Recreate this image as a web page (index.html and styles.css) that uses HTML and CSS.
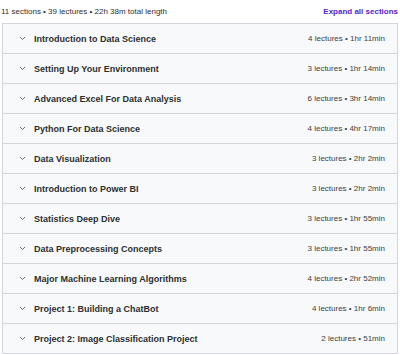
FILE: index.html
```html
<!DOCTYPE html>
<html lang="en">
<head>
<meta charset="UTF-8" />
<meta name="viewport" content="width=device-width, initial-scale=1.0">
<title>Course content</title>
<link rel="stylesheet" href="styles.css">
</head>
<body>
<div class="summary">
<span>11 sections • 39 lectures • 22h 38m total length</span>
<button class="expand">Expand all sections</button>
</div>

<div class="sections">
<div class="section"><span class="chev"><svg width="7" height="5" viewBox="0 0 7 5"><path d="M1 1l2.5 2.5 2.5-2.5" fill="none" stroke="#6a6f73" stroke-width="1"/></svg></span><span class="title">Introduction to Data Science</span><span class="meta">4 lectures • 1hr 11min</span></div>
<div class="section"><span class="chev"><svg width="7" height="5" viewBox="0 0 7 5"><path d="M1 1l2.5 2.5 2.5-2.5" fill="none" stroke="#6a6f73" stroke-width="1"/></svg></span><span class="title">Setting Up Your Environment</span><span class="meta">3 lectures • 1hr 14min</span></div>
<div class="section"><span class="chev"><svg width="7" height="5" viewBox="0 0 7 5"><path d="M1 1l2.5 2.5 2.5-2.5" fill="none" stroke="#6a6f73" stroke-width="1"/></svg></span><span class="title">Advanced Excel For Data Analysis</span><span class="meta">6 lectures • 3hr 14min</span></div>
<div class="section"><span class="chev"><svg width="7" height="5" viewBox="0 0 7 5"><path d="M1 1l2.5 2.5 2.5-2.5" fill="none" stroke="#6a6f73" stroke-width="1"/></svg></span><span class="title">Python For Data Science</span><span class="meta">4 lectures • 4hr 17min</span></div>
<div class="section"><span class="chev"><svg width="7" height="5" viewBox="0 0 7 5"><path d="M1 1l2.5 2.5 2.5-2.5" fill="none" stroke="#6a6f73" stroke-width="1"/></svg></span><span class="title">Data Visualization</span><span class="meta">3 lectures • 2hr 2min</span></div>
<div class="section"><span class="chev"><svg width="7" height="5" viewBox="0 0 7 5"><path d="M1 1l2.5 2.5 2.5-2.5" fill="none" stroke="#6a6f73" stroke-width="1"/></svg></span><span class="title">Introduction to Power BI</span><span class="meta">3 lectures • 2hr 2min</span></div>
<div class="section"><span class="chev"><svg width="7" height="5" viewBox="0 0 7 5"><path d="M1 1l2.5 2.5 2.5-2.5" fill="none" stroke="#6a6f73" stroke-width="1"/></svg></span><span class="title">Statistics Deep Dive</span><span class="meta">3 lectures • 1hr 55min</span></div>
<div class="section"><span class="chev"><svg width="7" height="5" viewBox="0 0 7 5"><path d="M1 1l2.5 2.5 2.5-2.5" fill="none" stroke="#6a6f73" stroke-width="1"/></svg></span><span class="title">Data Preprocessing Concepts</span><span class="meta">3 lectures • 1hr 55min</span></div>
<div class="section"><span class="chev"><svg width="7" height="5" viewBox="0 0 7 5"><path d="M1 1l2.5 2.5 2.5-2.5" fill="none" stroke="#6a6f73" stroke-width="1"/></svg></span><span class="title">Major Machine Learning Algorithms</span><span class="meta">4 lectures • 2hr 52min</span></div>
<div class="section"><span class="chev"><svg width="7" height="5" viewBox="0 0 7 5"><path d="M1 1l2.5 2.5 2.5-2.5" fill="none" stroke="#6a6f73" stroke-width="1"/></svg></span><span class="title">Project 1: Building a ChatBot</span><span class="meta">4 lectures • 1hr 6min</span></div>
<div class="section"><span class="chev"><svg width="7" height="5" viewBox="0 0 7 5"><path d="M1 1l2.5 2.5 2.5-2.5" fill="none" stroke="#6a6f73" stroke-width="1"/></svg></span><span class="title">Project 2: Image Classification Project</span><span class="meta">2 lectures • 51min</span></div>
</div>
</body>
</html>
```

FILE: styles.css
```css
body {
margin: 0;
padding: 0 2px 0 1px;
font-family: "Liberation Sans", Arial, sans-serif;
color: #2d2f31;
background: #fff;
}

.summary {
display: flex;
justify-content: space-between;
align-items: center;
height: 23px;
font-size: 8px;
color: #2d2f31;
}

.expand {
border: none;
background: none;
padding: 0;
font-family: inherit;
font-size: 8px;
font-weight: 700;
color: #5624d0;
cursor: pointer;
}

.sections {
border: 1px solid #d1d7dc;
border-bottom: none;
margin-left: 1px;
}

.section {
display: flex;
align-items: center;
height: 29px;
border-bottom: 1px solid #d1d7dc;
background: #f7f9fa;
padding: 0 12px 0 16px;
}

.chev {
display: flex;
width: 15px;
}

.title {
flex: 1;
font-size: 9px;
font-weight: 700;
}

.meta {
font-size: 8px;
color: #3e4143;
}
```
